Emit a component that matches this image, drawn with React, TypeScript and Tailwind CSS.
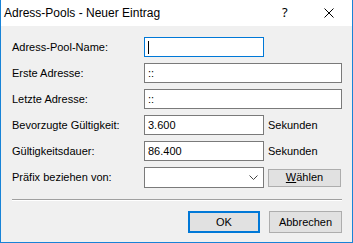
import React from "react";

const font = { fontFamily: '"Liberation Sans", Arial, sans-serif' };

function Row({ label, children }: { label: string; children: React.ReactNode }) {
  return (
    <div className="flex items-center h-[20px]">
      <div className="w-[132px] text-[11px] text-black leading-none">{label}</div>
      {children}
    </div>
  );
}

export default function App() {
  return (
    <div className="w-[353px] h-[243px] bg-[#f0f0f0] border-x border-b border-[#1883d7] flex flex-col" style={font}>
      <div className="h-[26px] bg-white flex items-center shrink-0">
        <div className="pl-[3px] text-[12px] text-black flex-1">
          Adress-Pools - Neuer Eintrag
        </div>
        <div className="w-[14px] text-[13px] text-black mr-[28px]" style={{ fontFamily: '"Noto Sans", sans-serif' }}>?</div>
        <svg width="10" height="10" viewBox="0 0 10 10" className="mr-[18px]">
          <path d="M0.5 0.5 L9.5 9.5 M9.5 0.5 L0.5 9.5" stroke="#000" strokeWidth="1" />
        </svg>
      </div>
      <div className="pl-[11px] pr-[10px] pt-[11px] flex flex-col gap-[6px]">
        <Row label="Adress-Pool-Name:">
          <div className="w-[120px] h-[20px] bg-white border border-[#0078d7] flex items-center pl-[3px]">
            <div className="w-px h-[13px] bg-black" />
          </div>
        </Row>
        <Row label="Erste Adresse:">
          <div className="w-[198px] h-[20px] bg-white border border-[#7a7a7a] text-[11px] pl-[3px] flex items-center">::</div>
        </Row>
        <Row label="Letzte Adresse:">
          <div className="w-[198px] h-[20px] bg-white border border-[#7a7a7a] text-[11px] pl-[3px] flex items-center">::</div>
        </Row>
        <Row label="Bevorzugte Gültigkeit:">
          <div className="w-[120px] h-[20px] bg-white border border-[#7a7a7a] text-[11px] pl-[3px] flex items-center">3.600</div>
          <div className="ml-[4px] text-[11px]">Sekunden</div>
        </Row>
        <Row label="Gültigkeitsdauer:">
          <div className="w-[120px] h-[20px] bg-white border border-[#7a7a7a] text-[11px] pl-[3px] flex items-center">86.400</div>
          <div className="ml-[4px] text-[11px]">Sekunden</div>
        </Row>
        <div className="flex items-center h-[21px]">
          <div className="w-[132px] text-[11px] text-black leading-none">Präfix beziehen von:</div>
          <div className="w-[120px] h-[21px] bg-white border border-[#7a7a7a] flex items-center justify-end pr-[5px]">
            <svg width="9" height="5" viewBox="0 0 9 5">
              <path d="M0.5 0.5 L4.5 4.5 L8.5 0.5" stroke="#444" fill="none" strokeWidth="1" />
            </svg>
          </div>
          <div className="ml-[4px] w-[73px] h-[18px] bg-[#e1e1e1] border border-[#adadad] text-[11px] flex items-center justify-center">
            <span><span className="underline">W</span>ählen</span>
          </div>
        </div>
      </div>
      <div className="mx-[11px] mt-[11px] w-[330px] h-px bg-[#a0a0a0] border-b border-white box-content" />
      <div className="flex justify-end gap-[9px] pr-[10px] mt-[10px]">
        <div className="w-[72px] h-[22px] bg-[#e1e1e1] border-2 border-[#0078d7] text-[11px] flex items-center justify-center">OK</div>
        <div className="w-[73px] h-[22px] bg-[#e1e1e1] border border-[#adadad] text-[11px] flex items-center justify-center">Abbrechen</div>
      </div>
    </div>
  );
}
